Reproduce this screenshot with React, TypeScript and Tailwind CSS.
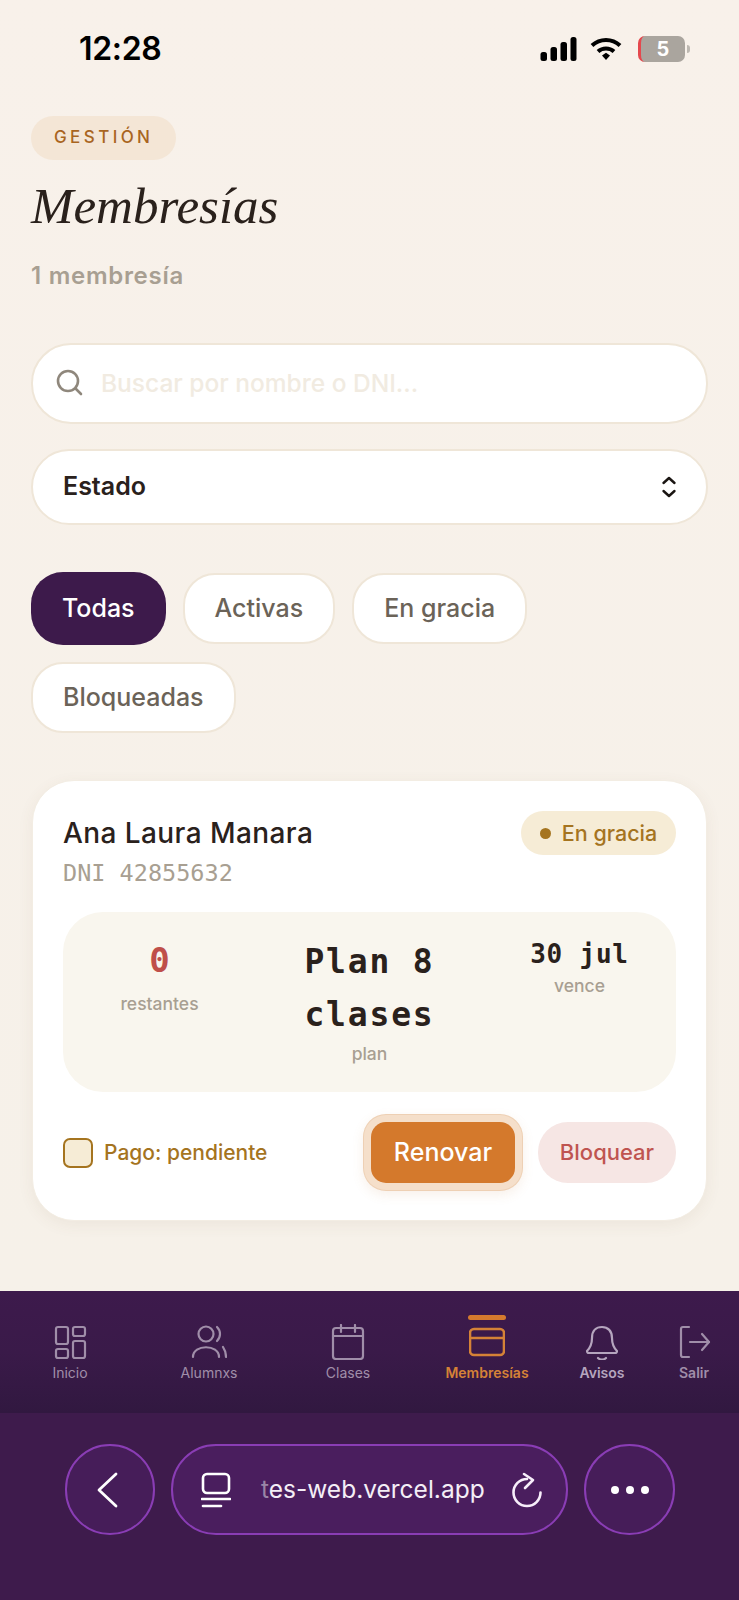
import React from "react";

const sans = "font-['Inter','Noto_Sans',sans-serif]";
const mono = "font-['DejaVu_Sans_Mono','Liberation_Mono',monospace]";

const NavIcon: React.FC<{ children: React.ReactNode; className?: string }> = ({ children, className }) => (
  <svg viewBox="0 0 36 36" fill="none" stroke="currentColor" strokeWidth="2.2" strokeLinecap="round" strokeLinejoin="round" className={className ?? "w-9 h-9"}>
    {children}
  </svg>
);

const NavItem: React.FC<{ label: string; center: string; color: string; children: React.ReactNode; active?: boolean; strong?: boolean }> = ({ label, center, color, children, active, strong }) => (
  <div className={`absolute top-0 flex flex-col items-center w-[100px] ${center} ${color}`}>
    <div className={`h-[5px] w-[38px] mt-[24px] rounded-sm ${active ? "bg-[#d47a2e]" : ""}`} />
    <div className="h-[38px] mt-[3px] flex items-center justify-center">{children}</div>
    <span className={`mt-[3px] text-[14px] leading-[18px] ${active || strong ? "font-semibold" : ""}`}>{label}</span>
  </div>
);

const Chip: React.FC<{ label: string; active?: boolean }> = ({ label, active }) =>
  active ? (
    <div className="h-[73px] px-[31px] rounded-[32px] bg-[#3d1a4b] text-white text-[25px] font-medium flex items-center -my-[1px]">{label}</div>
  ) : (
    <div className="h-[71px] px-[30px] rounded-[32px] bg-white border-2 border-[#efe6d8] text-[#6b6358] text-[25px] font-medium flex items-center">{label}</div>
  );

const Stat: React.FC<{ value: string; label: string; valueCls: string; labelCls: string; cls: string }> = ({ value, label, valueCls, labelCls, cls }) => (
  <div className={`flex flex-col items-center text-center ${cls}`}>
    <div className={`${mono} font-bold ${valueCls}`}>{value}</div>
    <div className={`text-[17.500px] font-medium text-[#a89f92] ${labelCls}`}>{label}</div>
  </div>
);

export default function App() {
  return (
    <div className={`${sans} w-[739px] h-[1600px] flex flex-col bg-[#f6f1e9] overflow-hidden`}>
      <div className="flex-1 bg-gradient-to-b from-[#f8f1ea] to-[#f6f1e9] px-[31px]">
        {/* status bar */}
        <div className="h-[98px] -mx-[31px] pl-[79px] pr-[49px] flex items-center justify-between">
          <span className="text-[32px] font-semibold text-black leading-none tracking-[-0.01em]">12:28</span>
          <div className="flex items-center gap-[7px]">
            <svg viewBox="0 0 36 24" className="w-[37px] h-[24px]" fill="black">
              <rect x="0" y="15" width="6.500" height="9" rx="2.500" />
              <rect x="10" y="10" width="6.500" height="14" rx="2.500" />
              <rect x="20" y="5" width="6.500" height="19" rx="2.500" />
              <rect x="30" y="0" width="6" height="24" rx="2.500" />
            </svg>
            <svg viewBox="0 0 32 24" className="w-[32px] h-[24px] ml-[6px]" fill="none" stroke="black" strokeWidth="4">
              <path d="M2 8.500C10 1 22 1 30 8.500" />
              <path d="M8 14.500C12.500 10.500 19.500 10.500 24 14.500" />
              <path d="M12 18.500L16 15.800L20 18.500L16 23Z" fill="black" stroke="none" />
            </svg>
            <div className="flex items-center ml-[9px]">
              <div className="w-[47px] h-[26px] rounded-[7px] bg-[#aaa59e] border-l-[3px] border-[#e5484d] flex items-center justify-center text-white text-[20px] font-bold">5</div>
              <div className="w-[3px] h-[8px] rounded-r-full bg-[#bdb8b1] ml-[2px]" />
            </div>
          </div>
        </div>

        <div className="w-fit h-[44px] mt-[18px] px-[23px] rounded-[22px] bg-[#f4e6d6] flex items-center text-[#a9651f] text-[17px] font-medium tracking-[0.2em]">GESTIÓN</div>
        <h1 className="font-['Liberation_Serif',serif] italic text-[51px] leading-[58px] mt-[17px] text-[#2a211c]">Membresías</h1>
        <p className="text-[24px] leading-[30px] font-semibold tracking-[0.03em] text-[#a89f92] mt-[26px]">1 membresía</p>

        {/* search */}
        <div className="h-[81px] mt-[52px] rounded-[40px] bg-white border-2 border-[#efe6d8] pl-[22px] flex items-center gap-[18px]">
          <svg viewBox="0 0 28 28" className="w-[28px] h-[28px] mb-[3px]" fill="none" stroke="#8f877c" strokeWidth="2.600" strokeLinecap="round">
            <circle cx="13" cy="13" r="10" />
            <path d="M21 21L26 26" />
          </svg>
          <span className="text-[24.500px] font-medium text-[#f1ebe1]">Buscar por nombre o DNI...</span>
        </div>

        {/* select */}
        <div className="h-[76px] mt-[25px] rounded-[38px] bg-white border-2 border-[#efe6d8] pl-[30px] pr-[29px] flex items-center justify-between">
          <span className="text-[25px] font-semibold text-[#2a211c]">Estado</span>
          <svg viewBox="0 0 16 22" className="w-[16px] h-[22px]" fill="none" stroke="#1a1512" strokeWidth="2.400" strokeLinecap="round" strokeLinejoin="round">
            <path d="M2.500 7L8 2L13.500 7" />
            <path d="M2.500 15L8 20L13.500 15" />
          </svg>
        </div>

        {/* filters */}
        <div className="mt-[48px] flex flex-wrap gap-x-[17px] gap-y-[18px] w-[640px]">
          <Chip label="Todas" active />
          <Chip label="Activas" />
          <Chip label="En gracia" />
          <Chip label="Bloqueadas" />
        </div>

        {/* card */}
        <div className="mt-[47px] h-[441px] ml-[1px] w-[675px] rounded-[42px] bg-white shadow-[0_4px_16px_rgba(120,90,50,0.07)] border border-[#f3ede3] px-[30px] pt-[30px]">
          <div className="flex items-start justify-between">
            <div>
              <div className="text-[28px] leading-[44px] font-medium tracking-[0.015em] text-[#2a211c]">Ana Laura Manara</div>
              <div className={`${mono} text-[23.500px] leading-[30px] text-[#a89f92] mt-[3px]`}>DNI 42855632</div>
            </div>
            <div className="h-[44px] w-[155px] rounded-[22px] bg-[#f6ecd6] flex items-center justify-center gap-[11px] text-[#a5741f] text-[21.500px] font-medium">
              <span className="w-[11px] h-[11px] rounded-full bg-[#a5741f]" />
              En gracia
            </div>
          </div>

          <div className="h-[180px] mt-[24px] rounded-[40px] bg-[#f9f6ee] flex items-start">
            <Stat cls="w-[193px] pt-[28px]" value="0" label="restantes" valueCls="text-[34px] leading-[40px] text-[#bf4f4a]" labelCls="leading-[24px] mt-[12px]" />
            <Stat cls="w-[227px] pt-[23px]" value="Plan 8 clases" label="plan" valueCls="text-[33px] leading-[53px] tracking-[0.055em] w-[180px] text-[#2a211c]" labelCls="leading-[24px] mt-[1px]" />
            <Stat cls="w-[193px] pt-[24px]" value="30 jul" label="vence" valueCls="text-[26px] leading-[36px] tracking-[0.03em] text-[#2a211c]" labelCls="leading-[24px] mt-[2px]" />
          </div>

          <div className="mt-[30px] flex items-center">
            <div className="w-[30px] h-[30px] rounded-[7px] bg-[#f6ecd6] border-[2.500px] border-[#a5741f]" />
            <span className="ml-[11px] text-[21px] font-medium text-[#a5741f]">Pago: pendiente</span>
            <div className="ml-auto h-[61px] w-[144px] rounded-[15px] bg-[#d4792c] shadow-[0_0_0_7px_#f5dfca,0_0_0_8px_#eed0b4,0_4px_12px_8px_rgba(200,130,70,0.12)] flex items-center justify-center text-white text-[25px] font-medium">Renovar</div>
            <div className="ml-[23px] h-[61px] w-[138px] rounded-[30px] bg-[#f6e6e4] flex items-center justify-center text-[#bf5450] text-[22px] font-medium">Bloquear</div>
          </div>
        </div>
      </div>

      {/* bottom nav */}
      <div className="relative h-[122px] bg-gradient-to-b from-[#3d1a4c] via-[#3a1a49] to-[#311840] shrink-0">
        <NavItem label="Inicio" center="left-[20px]" color="text-[#a08ea9]">
          <NavIcon>
            <rect x="4" y="3" width="12" height="17" rx="2" />
            <rect x="21" y="3" width="12" height="9" rx="2" />
            <rect x="4" y="25" width="12" height="9" rx="2" />
            <rect x="21" y="17" width="12" height="17" rx="2" />
          </NavIcon>
        </NavItem>
        <NavItem label="Alumnxs" center="left-[159px]" color="text-[#a08ea9]">
          <NavIcon>
            <circle cx="15" cy="10" r="7.500" />
            <path d="M26 3C30 7 30 13 26 17" />
            <path d="M2 33C2 20 28 20 28 33" />
            <path d="M32 23C34 26 35 29 35 33" />
          </NavIcon>
        </NavItem>
        <NavItem label="Clases" center="left-[298px]" color="text-[#a08ea9]">
          <NavIcon>
            <rect x="3" y="4" width="30" height="31" rx="3" />
            <path d="M3 12H33" />
            <path d="M11 1V8M25 1V8" />
          </NavIcon>
        </NavItem>
        <NavItem label="Membresías" center="left-[437px]" color="text-[#d58237]" active>
          <NavIcon>
            <rect x="1" y="5" width="34" height="26" rx="4" strokeWidth="2.600" />
            <path d="M1 14H35" strokeWidth="2.600" />
          </NavIcon>
        </NavItem>
        <NavItem label="Avisos" center="left-[552px]" color="text-[#b5a5be]" strong>
          <NavIcon>
            <path d="M3 27C7 23 8 20 8 14C8 7 12 3 18 3C24 3 28 7 28 14C28 20 29 23 33 27C33 28 32 29 31 29H5C4 29 3 28 3 27Z" />
            <path d="M14 34C16 36 20 36 22 34" />
          </NavIcon>
        </NavItem>
        <NavItem label="Salir" center="left-[644px]" color="text-[#a08ea9]" strong>
          <NavIcon>
            <path d="M13 3H7C5.500 3 5 4 5 5V31C5 32 5.500 33 7 33H13" />
            <path d="M14 18H33" />
            <path d="M26 10L33 18L26 26" />
          </NavIcon>
        </NavItem>
      </div>

      {/* browser bar */}
      <div className="h-[187px] shrink-0 bg-[#3e1b4c] pt-[31px] pl-[65px] flex items-start gap-[16px] text-white">
        <div className="w-[90px] h-[91px] rounded-full bg-[#461d59] border-2 border-[#8a3db5] flex items-center justify-center">
          <svg viewBox="0 0 22 36" className="w-[22px] h-[36px] mr-[6px]" fill="none" stroke="white" strokeWidth="2.800" strokeLinecap="round" strokeLinejoin="round">
            <path d="M20 2L3 18L20 34" />
          </svg>
        </div>
        <div className="relative w-[397px] h-[91px] rounded-[45px] bg-[#4a1e5e] border-2 border-[#8a3db5] flex items-center">
          <svg viewBox="0 0 30 36" className="ml-[28px] w-[30px] h-[36px]" fill="none" stroke="white" strokeWidth="2.600" strokeLinecap="round" strokeLinejoin="round">
            <rect x="2" y="2" width="26" height="19" rx="4" />
            <path d="M1 27H29" />
            <path d="M2 34H20" />
          </svg>
          <span className="ml-[30px] text-[24.500px] text-[#f4eef6]"><span className="text-[#9a86a6]">t</span>es-web.vercel.app</span>
          <svg viewBox="0 0 32 36" className="absolute right-[23px] w-[32px] h-[36px]" fill="none" stroke="#f7eefa" strokeWidth="2.600" strokeLinecap="round" strokeLinejoin="round">
            <path d="M16 7A13.500 13.500 0 1 0 29.500 20.500" />
            <path d="M13 2L22 8L14 16" />
          </svg>
        </div>
        <div className="w-[91px] h-[91px] rounded-full bg-[#461d59] border-2 border-[#8a3db5] flex items-center justify-center gap-[7px]">
          <span className="w-[8px] h-[8px] rounded-full bg-white" />
          <span className="w-[8px] h-[8px] rounded-full bg-white" />
          <span className="w-[8px] h-[8px] rounded-full bg-white" />
        </div>
      </div>
    </div>
  );
}
